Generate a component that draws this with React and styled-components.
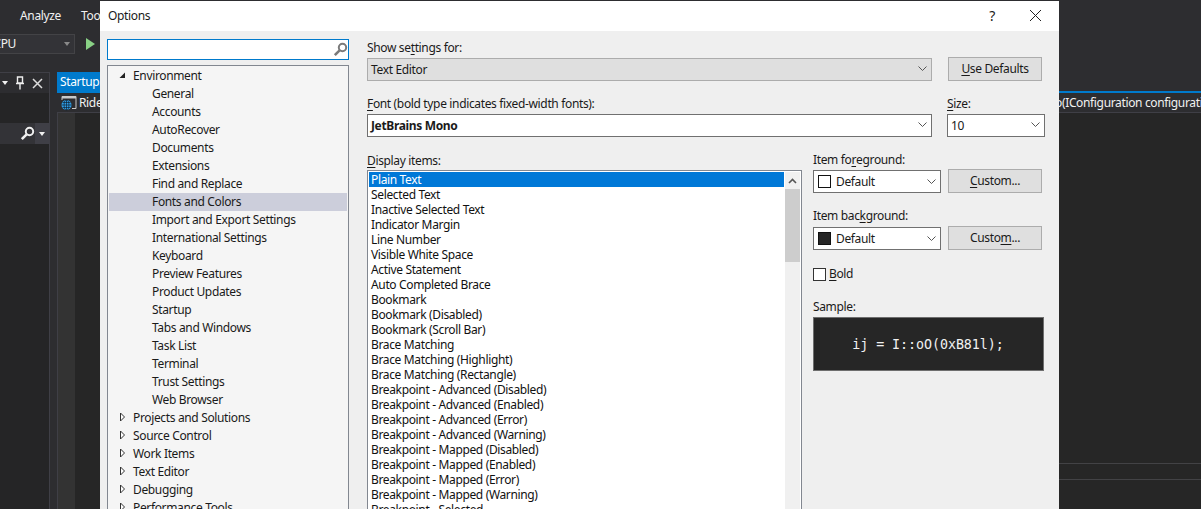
import React from "react";
import styled, { createGlobalStyle } from "styled-components";

const UI_FONT = `"Noto Sans", "Open Sans", sans-serif`;

const treeItems = [
  { label: "Environment", level: 0, open: true },
  { label: "General", level: 1 },
  { label: "Accounts", level: 1 },
  { label: "AutoRecover", level: 1 },
  { label: "Documents", level: 1 },
  { label: "Extensions", level: 1 },
  { label: "Find and Replace", level: 1 },
  { label: "Fonts and Colors", level: 1, selected: true },
  { label: "Import and Export Settings", level: 1 },
  { label: "International Settings", level: 1 },
  { label: "Keyboard", level: 1 },
  { label: "Preview Features", level: 1 },
  { label: "Product Updates", level: 1 },
  { label: "Startup", level: 1 },
  { label: "Tabs and Windows", level: 1 },
  { label: "Task List", level: 1 },
  { label: "Terminal", level: 1 },
  { label: "Trust Settings", level: 1 },
  { label: "Web Browser", level: 1 },
  { label: "Projects and Solutions", level: 0 },
  { label: "Source Control", level: 0 },
  { label: "Work Items", level: 0 },
  { label: "Text Editor", level: 0 },
  { label: "Debugging", level: 0 },
  { label: "Performance Tools", level: 0 },
];

const displayItems = [
  "Plain Text",
  "Selected Text",
  "Inactive Selected Text",
  "Indicator Margin",
  "Line Number",
  "Visible White Space",
  "Active Statement",
  "Auto Completed Brace",
  "Bookmark",
  "Bookmark (Disabled)",
  "Bookmark (Scroll Bar)",
  "Brace Matching",
  "Brace Matching (Highlight)",
  "Brace Matching (Rectangle)",
  "Breakpoint - Advanced (Disabled)",
  "Breakpoint - Advanced (Enabled)",
  "Breakpoint - Advanced (Error)",
  "Breakpoint - Advanced (Warning)",
  "Breakpoint - Mapped (Disabled)",
  "Breakpoint - Mapped (Enabled)",
  "Breakpoint - Mapped (Error)",
  "Breakpoint - Mapped (Warning)",
  "Breakpoint - Selected",
];

const Chevron = () => (
  <svg width="9" height="6" viewBox="0 0 9 6">
    <polyline points="0.5,0.5 4.5,4.5 8.5,0.5" fill="none" stroke="#555" strokeWidth="1" />
  </svg>
);

const SearchIcon = ({ color = "#7a7a7a" }) => (
  <svg width="15" height="15" viewBox="0 0 15 15">
    <circle cx="9.5" cy="5.5" r="3.7" fill="none" stroke={color} strokeWidth="2" />
    <line x1="6.6" y1="8.4" x2="1.8" y2="13.2" stroke={color} strokeWidth="2.6" />
  </svg>
);

const TreeArrow = ({ open }) =>
  open ? (
    <svg width="7" height="7" viewBox="0 0 7 7">
      <polygon points="6,0.5 6,6 0.5,6" fill="#222" />
    </svg>
  ) : (
    <svg width="7" height="10" viewBox="0 0 7 10">
      <polygon points="1.5,1 5.5,5 1.5,9" fill="#fff" stroke="#333" strokeWidth="1" />
    </svg>
  );

const GlobeIcon = () => (
  <svg width="17" height="16" viewBox="0 0 17 16">
    <path d="M2 5V1.5h14v12h-4" fill="none" stroke="#c8c8c8" strokeWidth="1" />
    <rect x="2" y="1.5" width="14" height="2" fill="#c8c8c8" />
    <circle cx="6.5" cy="10" r="5" fill="#2f9fe8" />
    <path d="M1.5 10h10M2.5 7.5h8M2.5 12.5h8M6.5 5v10" stroke="#123" strokeWidth="0.7" fill="none" />
    <ellipse cx="6.5" cy="10" rx="2.4" ry="5" fill="none" stroke="#123" strokeWidth="0.7" />
  </svg>
);

const App = () => {
  return (
    <>
      <GlobalStyle />
      <Page>
        <MenuBar>
          <MenuItem>Analyze</MenuItem>
          <MenuItem>Tools</MenuItem>
        </MenuBar>
        <Toolbar>
          <PlatformCombo>
            <PlatformName>Any CPU</PlatformName>
            <ComboCaret />
          </PlatformCombo>
          <PlayButton />
        </Toolbar>
        <Workspace>
          <ToolPanel>
            <PanelHeader>
              <ComboCaret $light />
              <svg width="10" height="14" viewBox="0 0 10 14">
                <path d="M2.5 1h5v6h-5zM1 7.5h8M5 8v5.5" fill="none" stroke="#eee" strokeWidth="1.4" />
              </svg>
              <svg width="11" height="11" viewBox="0 0 11 11">
                <path d="M1 1l9 9M10 1l-9 9" stroke="#ddd" strokeWidth="1.5" />
              </svg>
            </PanelHeader>
            <PanelSearch>
              <SearchIcon color="#f0f0f0" />
              <PanelSearchMenu>
                <ComboCaret $light />
              </PanelSearchMenu>
            </PanelSearch>
          </ToolPanel>
          <DocumentWell>
            <TabStrip>
              <ActiveTab>Startup.cs</ActiveTab>
            </TabStrip>
            <NavBar>
              <NavLeft>
                <GlobeIcon />
                Rider
              </NavLeft>
              <NavRight>o(IConfiguration configuration)</NavRight>
            </NavBar>
            <EditorArea>
              <EditorMargin />
              <EditorBody>
                <EditorLine $height={16} />
                <EditorLine $height={30} />
              </EditorBody>
            </EditorArea>
          </DocumentWell>
        </Workspace>

        <Dialog>
          <TitleBar>
            <DialogTitle>Options</DialogTitle>
            <HelpMark>?</HelpMark>
            <CloseMark>
              <svg width="13" height="13" viewBox="0 0 13 13">
                <path d="M1 1l11 11M12 1L1 12" stroke="#222" strokeWidth="1" />
              </svg>
            </CloseMark>
          </TitleBar>
          <DialogBody>
            <LeftColumn>
              <SearchBox>
                <SearchIcon />
              </SearchBox>
              <Tree>
                {treeItems.map((item) => (
                  <TreeRow key={item.label} $level={item.level} $selected={item.selected}>
                    {item.level === 0 && (
                      <ArrowSlot>
                        <TreeArrow open={item.open} />
                      </ArrowSlot>
                    )}
                    {item.label}
                  </TreeRow>
                ))}
              </Tree>
            </LeftColumn>

            <RightColumn>
              <FieldLabel $top={0} $height={18} $lift={2}>
                Show se<Key>t</Key>tings for:
              </FieldLabel>
              <FieldRow>
                <Combo $width={565} $disabled>
                  Text Editor
                  <Chevron />
                </Combo>
                <Button $width={94}>
                  <Key>U</Key>se Defaults
                </Button>
              </FieldRow>

              <FontRows>
                <div>
                  <FieldLabel $top={14} $height={19} $lift={3}>
                    <Key>F</Key>ont (bold type indicates fixed-width fonts):
                  </FieldLabel>
                  <Combo $width={565}>
                    <strong>JetBrains Mono</strong>
                    <Chevron />
                  </Combo>
                </div>
                <div>
                  <FieldLabel $top={14} $height={19} $lift={3}>
                    <Key>S</Key>ize:
                  </FieldLabel>
                  <Combo $width={98}>
                    10
                    <Chevron />
                  </Combo>
                </div>
              </FontRows>

              <ItemsSection>
                <ItemsColumn>
                  <FieldLabel $top={14} $height={19} $lift={1}>
                    <Key>D</Key>isplay items:
                  </FieldLabel>
                  <ItemsList>
                    <ItemsRows>
                      {displayItems.map((item, i) => (
                        <ItemRow key={item} $selected={i === 0}>
                          {item}
                        </ItemRow>
                      ))}
                    </ItemsRows>
                    <Scrollbar>
                      <ScrollUp>
                        <svg width="9" height="6" viewBox="0 0 9 6">
                          <polyline points="1,5 4.5,1.5 8,5" fill="none" stroke="#555" strokeWidth="1.6" />
                        </svg>
                      </ScrollUp>
                      <ScrollThumb />
                    </Scrollbar>
                  </ItemsList>
                </ItemsColumn>

                <SideColumn>
                  <FieldLabel $top={14} $height={18} $lift={1}>
                    Item fo<Key>r</Key>eground:
                  </FieldLabel>
                  <ColorRow>
                    <ColorCombo>
                      <Swatch $color="#ffffff" />
                      <ColorName>Default</ColorName>
                      <Chevron />
                    </ColorCombo>
                    <Button $width={94}>
                      <Key>C</Key>ustom...
                    </Button>
                  </ColorRow>

                  <FieldLabel $top={14} $height={19} $lift={2}>
                    Item bac<Key>k</Key>ground:
                  </FieldLabel>
                  <ColorRow>
                    <ColorCombo>
                      <Swatch $color="#262626" />
                      <ColorName>Default</ColorName>
                      <Chevron />
                    </ColorCombo>
                    <Button $width={94}>
                      Custo<Key>m</Key>...
                    </Button>
                  </ColorRow>

                  <BoldRow>
                    <CheckBox />
                    <BoldLabel>
                      <Key>B</Key>old
                    </BoldLabel>
                  </BoldRow>

                  <FieldLabel $top={16} $height={20} $lift={1}>
                    Sample:
                  </FieldLabel>
                  <SampleBox>ij = I::oO(0xB81l);</SampleBox>
                </SideColumn>
              </ItemsSection>
            </RightColumn>
          </DialogBody>
        </Dialog>
      </Page>
    </>
  );
};

const GlobalStyle = createGlobalStyle`
  html, body {
    margin: 0;
    padding: 0;
    background: #2d2d30;
  }
  * {
    box-sizing: border-box;
  }
`;

const Page = styled.div`
  position: relative;
  display: flex;
  flex-direction: column;
  width: 1201px;
  height: 509px;
  overflow: hidden;
  background: #2d2d30;
  color: #f1f1f1;
  font-family: ${UI_FONT};
  font-size: 12px;
  letter-spacing: -0.35px;
`;

const MenuBar = styled.div`
  display: flex;
  align-items: center;
  gap: 20px;
  height: 31px;
  padding-left: 20px;
`;

const MenuItem = styled.span`
  color: #f1f1f1;
`;

const Toolbar = styled.div`
  display: flex;
  align-items: center;
  height: 29px;
  padding-bottom: 4px;
`;

const PlatformCombo = styled.div`
  display: flex;
  align-items: center;
  justify-content: flex-end;
  flex: none;
  width: 75px;
  height: 20px;
  padding-right: 4px;
  background: #333337;
  border: 1px solid #434346;
  border-left: 0;
  overflow: hidden;
`;

const PlatformName = styled.span`
  margin-right: 48px;
  white-space: nowrap;
`;

const ComboCaret = styled.span`
  flex: none;
  width: 0;
  height: 0;
  border-left: 3.5px solid transparent;
  border-right: 3.5px solid transparent;
  border-top: 4px solid ${(p) => (p.$light ? "#f1f1f1" : "#8a8a8a")};
`;

const PlayButton = styled.span`
  flex: none;
  width: 0;
  height: 0;
  margin-left: 11px;
  border-top: 6px solid transparent;
  border-bottom: 6px solid transparent;
  border-left: 9px solid #89d185;
`;

const Workspace = styled.div`
  display: flex;
  flex: 1;
  padding-top: 12px;
  min-height: 0;
`;

const ToolPanel = styled.div`
  flex: none;
  width: 50px;
  background: #252526;
  border-top: 1px solid #3f3f46;
  border-right: 1px solid #3f3f46;
`;

const PanelHeader = styled.div`
  display: flex;
  align-items: center;
  gap: 7px;
  height: 20px;
  padding-left: 2px;
  background: #2d2d30;
`;

const PanelSearch = styled.div`
  display: flex;
  align-items: center;
  justify-content: flex-end;
  height: 21px;
  margin-top: 30px;
  background: #333337;
`;

const PanelSearchMenu = styled.span`
  display: flex;
  align-items: center;
  justify-content: center;
  width: 14px;
  height: 100%;
  background: #3f3f46;
`;

const DocumentWell = styled.div`
  display: flex;
  flex-direction: column;
  flex: 1;
  min-width: 0;
  margin-left: 7px;
`;

const TabStrip = styled.div`
  display: flex;
  height: 21px;
  border-bottom: 2px solid #007acc;
`;

const ActiveTab = styled.div`
  display: flex;
  align-items: center;
  width: 70px;
  padding-left: 3px;
  background: #007acc;
  color: #fff;
`;

const NavBar = styled.div`
  display: flex;
  align-items: center;
  justify-content: space-between;
  height: 20px;
  background: #2d2d30;
  border-bottom: 1px solid #3f3f46;
`;

const NavLeft = styled.div`
  display: flex;
  align-items: center;
  gap: 2px;
  padding-left: 3px;
`;

const NavRight = styled.div`
  width: 142px;
  overflow: hidden;
  white-space: nowrap;
  text-indent: -4px;
`;

const EditorArea = styled.div`
  display: flex;
  flex: 1;
  min-height: 0;
  background: #262626;
  border-left: 1px solid #3f3f46;
`;

const EditorMargin = styled.div`
  flex: none;
  width: 17px;
  background: #333333;
`;

const EditorBody = styled.div`
  display: flex;
  flex: 1;
  flex-direction: column;
  justify-content: flex-end;
  padding-left: 40px;
`;

const EditorLine = styled.div`
  height: ${(p) => p.$height}px;
  border-top: 1px solid #424245;
`;

const Dialog = styled.div`
  position: absolute;
  left: 100px;
  top: 1px;
  bottom: 0;
  width: 959px;
  overflow: hidden;
  background: #efefef;
  color: #1a1a1a;
`;

const TitleBar = styled.div`
  display: flex;
  align-items: center;
  height: 30px;
  padding-bottom: 1px;
  background: #fff;
`;

const DialogTitle = styled.span`
  flex: 1;
  padding-left: 8px;
`;

const HelpMark = styled.span`
  width: 12px;
  font-size: 14px;
  text-align: center;
`;

const CloseMark = styled.span`
  display: flex;
  margin: 0 17px 0 31px;
`;

const DialogBody = styled.div`
  display: flex;
  padding-top: 8px;
`;

const LeftColumn = styled.div`
  flex: none;
  width: 242px;
  margin-left: 7px;
`;

const SearchBox = styled.div`
  display: flex;
  align-items: center;
  justify-content: flex-end;
  height: 21px;
  background: #fff;
  border: 1px solid #007acc;
`;

const Tree = styled.div`
  margin-top: 5px;
  height: 500px;
  padding: 1px;
  background: #f5f5f5;
  border: 1px solid #828790;
`;

const TreeRow = styled.div`
  display: flex;
  align-items: center;
  height: 18px;
  padding-left: ${(p) => (p.$level === 0 ? 10 : 43)}px;
  padding-bottom: 2px;
  background: ${(p) => (p.$selected ? "#cccedb" : "transparent")};
  white-space: nowrap;
`;

const ArrowSlot = styled.span`
  display: flex;
  width: 14px;
`;

const RightColumn = styled.div`
  flex: none;
  width: 678px;
  margin-left: 18px;
`;

const FieldLabel = styled.div`
  display: flex;
  align-items: center;
  height: ${(p) => p.$height}px;
  margin-top: ${(p) => p.$top}px;
  padding-bottom: ${(p) => p.$lift || 0}px;
  white-space: pre;
`;

const Key = styled.span`
  text-decoration: underline;
  text-underline-offset: 2px;
`;

const FieldRow = styled.div`
  display: flex;
  gap: 16px;
  align-items: flex-end;
`;

const Combo = styled.div`
  display: flex;
  align-items: center;
  justify-content: space-between;
  width: ${(p) => p.$width}px;
  height: 23px;
  padding: 0 4px 1px 3px;
  background: ${(p) => (p.$disabled ? "#dfdfdf" : "#fff")};
  border: 1px solid ${(p) => (p.$disabled ? "#acacac" : "#707070")};
`;

const Button = styled.div`
  display: flex;
  align-items: center;
  justify-content: center;
  flex: none;
  width: ${(p) => p.$width}px;
  height: 24px;
  padding-bottom: 2px;
  background: #dfdfdf;
  border: 1px solid #acacac;
`;

const FontRows = styled.div`
  display: flex;
  gap: 15px;
`;

const ItemsSection = styled.div`
  display: flex;
  gap: 11px;
  align-items: flex-start;
`;

const ItemsColumn = styled.div`
  flex: none;
  width: 435px;
`;

const ItemsList = styled.div`
  display: flex;
  height: 400px;
  padding: 1px;
  background: #fff;
  border: 1px solid #828790;
`;

const ItemsRows = styled.div`
  flex: 1;
  min-width: 0;
`;

const ItemRow = styled.div`
  display: flex;
  align-items: center;
  height: 15px;
  padding-left: 2px;
  background: ${(p) => (p.$selected ? "#0078d7" : "transparent")};
  color: ${(p) => (p.$selected ? "#fff" : "#111")};
  white-space: nowrap;
`;

const Scrollbar = styled.div`
  flex: none;
  width: 15px;
  margin-left: 1px;
  background: #f0f0f0;
`;

const ScrollUp = styled.div`
  display: flex;
  align-items: center;
  justify-content: center;
  height: 17px;
`;

const ScrollThumb = styled.div`
  height: 73px;
  background: #cdcdcd;
`;

const SideColumn = styled.div`
  flex: none;
  width: 232px;
`;

const ColorRow = styled.div`
  display: flex;
  align-items: flex-end;
  gap: 7px;
  height: 24px;
`;

const ColorCombo = styled.div`
  display: flex;
  align-items: center;
  flex: none;
  width: 128px;
  height: 23px;
  padding: 0 4px;
  background: #fff;
  border: 1px solid #707070;
`;

const Swatch = styled.span`
  flex: none;
  width: 13px;
  height: 13px;
  background: ${(p) => p.$color};
  border: 1px solid #111;
`;

const ColorName = styled.span`
  flex: 1;
  margin-left: 5px;
`;

const BoldRow = styled.div`
  display: flex;
  align-items: center;
  gap: 3px;
  height: 14px;
  margin-top: 17px;
`;

const BoldLabel = styled.span`
  margin-top: -2px;
`;

const CheckBox = styled.span`
  flex: none;
  width: 13px;
  height: 13px;
  background: #fff;
  border: 1px solid #333;
`;

const SampleBox = styled.div`
  display: flex;
  align-items: center;
  justify-content: center;
  width: 231px;
  height: 54px;
  padding-right: 1px;
  background: #262626;
  border: 1px solid #6e6e6e;
  color: #f1f1f1;
  font-family: "DejaVu Sans Mono", monospace;
  font-size: 13.33px;
  letter-spacing: -0.05px;
`;

export default App;
